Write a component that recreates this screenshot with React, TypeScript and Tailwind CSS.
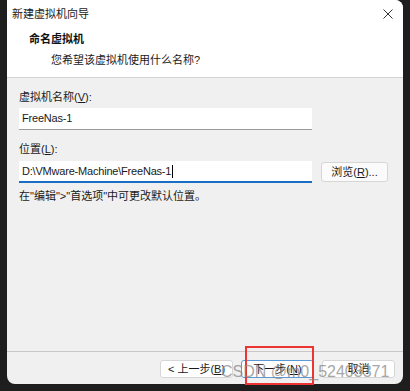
const font = { fontFamily: '"Liberation Sans", "Noto Sans CJK SC", sans-serif' };

const WizardButton: React.FC<{ label: string; accel?: string; prefix?: string; primary?: boolean }> = ({
  label,
  accel,
  prefix,
  primary,
}) => {
  return (
    <div
      className={`flex h-[18px] w-[73px] items-center justify-center rounded-[3px] border bg-white text-[11px] text-[#1a1a1a] ${
        primary ? "border-[#5b9bd5]" : "border-[#d6d6d6]"
      }`}
    >
      {prefix}
      {label}
      {accel && (
        <>
          (<span className="underline">{accel}</span>)
        </>
      )}
    </div>
  );
};

export default function App() {
  return (
    <div className="relative h-[391px] w-[410px] overflow-hidden bg-[#1e1e1e]" style={font}>
      <div className="ml-[7px] flex h-[384px] w-[396px] flex-col overflow-hidden rounded-tr-lg rounded-b-lg bg-[#f0f0f0]">
        {/* header */}
        <div className="h-[78px] border-b border-[#d4d4d4] bg-white">
          <div className="flex h-[28px] items-center justify-between pl-[5px] pr-[9px]">
            <span className="text-[11px] text-[#1a1a1a]">新建虚拟机向导</span>
            <svg width="10" height="10" viewBox="0 0 10 10" className="mr-[1px]">
              <path d="M0.5 0.5 L9.5 9.5 M9.5 0.5 L0.5 9.5" stroke="#333" strokeWidth="1" fill="none" />
            </svg>
          </div>
          <div className="pl-[22px] text-[11px] font-bold leading-[22px] text-[#111]">命名虚拟机</div>
          <div className="pl-[44px] text-[11px] leading-[20px] text-[#1a1a1a]">您希望该虚拟机使用什么名称?</div>
        </div>

        {/* body */}
        <div className="flex-1 pl-[12px] pt-[10px] text-[11px] text-[#1a1a1a]">
          <div className="leading-[18px]">
            虚拟机名称(<span className="underline">V</span>):
          </div>
          <div className="mt-[2px] flex h-[22px] w-[293px] items-center border-b border-[#9a9a9a] bg-white pl-[3px] text-[11px] tracking-[-0.2px]">
            FreeNas-1
          </div>
          <div className="mt-[10px] leading-[18px]">
            位置(<span className="underline">L</span>):
          </div>
          <div className="mt-[3px] flex items-center">
            <div className="flex h-[22px] w-[293px] items-center border-b-2 border-[#1a6fc4] bg-white pl-[3px] text-[11px] tracking-[-0.2px]">
              D:\VMware-Machine\FreeNas-1
              <span className="ml-px inline-block h-[13px] w-px bg-black" />
            </div>
            <div className="ml-[9px] flex h-[20px] w-[67px] items-center justify-center rounded-[3px] border border-[#d6d6d6] bg-[#fbfbfb] text-[11px]">
              浏览(<span className="underline">R</span>)...
            </div>
          </div>
          <div className="mt-[4px] leading-[18px]">在"编辑"&gt;"首选项"中可更改默认位置。</div>
        </div>

        {/* footer */}
        <div className="flex h-[33px] items-start justify-end gap-[8px] border-t border-[#c8c8c8] pr-[8px] pt-[8px]">
          <WizardButton label="上一步" accel="B" prefix="< " />
          <WizardButton label="下一步" accel="N" primary />
          <WizardButton label="取消" />
        </div>
      </div>

      {/* highlight box */}
      <div className="absolute left-[245px] top-[346px] h-[39px] w-[69px] border-2 border-[#ee3333]" />

      {/* watermark */}
      <div className="absolute left-[221px] top-[362px] whitespace-nowrap text-[16px] leading-[20px] text-[#8a8a8a] opacity-75" style={font}>
        CSDN @m0_52403371
      </div>
    </div>
  );
}
